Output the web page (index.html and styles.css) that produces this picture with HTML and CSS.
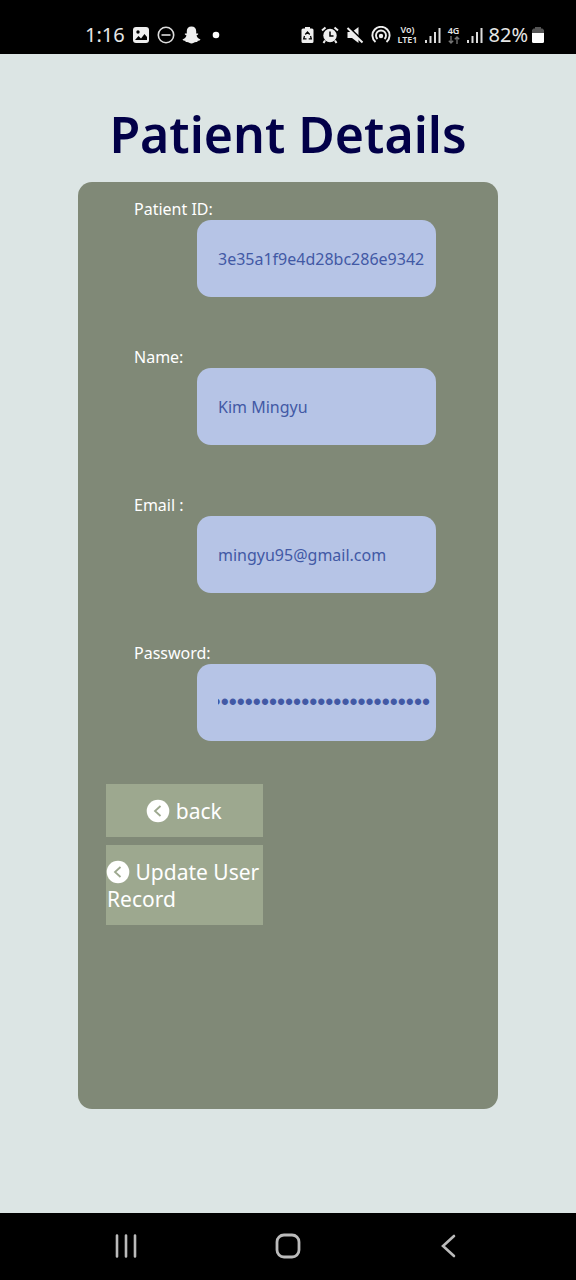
FILE: index.html
```html
<!DOCTYPE html>
<html lang="en">
<head>
<meta charset="utf-8">
<meta name="viewport" content="width=device-width, initial-scale=1">
<title>Patient Details</title>
<link rel="stylesheet" href="styles.css">
</head>
<body>
<header class="status">
  <div class="status-left">
    <span class="time">1:16</span>
    <svg width="18" height="18" viewBox="0 0 18 18"><rect x="1" y="1" width="16" height="16" rx="3" fill="#eee"/><circle cx="6" cy="6" r="1.7"/><path d="M3 14l3.500-4 2.500 2.500 3.500-4.500 2.500 3v3z"/></svg>
    <svg width="18" height="18" viewBox="0 0 18 18" fill="none" stroke="#ddd" stroke-width="1.600"><circle cx="9" cy="9" r="7.700"/><path d="M4.500 9h9"/></svg>
    <svg width="19" height="18" viewBox="0 0 19 18"><path fill="#eee" d="M9.500.5C6.500.5 4.800 2.600 4.800 5v2.500L3 7.500c-.8.700.3 1.500 1.500 2C4 11.500 2.500 12.800.5 13.500c.3 1 1.500 1.200 2.700 1.300l.6 1.200c1.600-.3 2.500 0 3.400.8 1.500 1 3.100 1 4.600 0 .9-.8 1.800-1.100 3.400-.8l.6-1.200c1.200-.1 2.400-.3 2.700-1.300-2-.7-3.500-2-4-4 1.200-.5 2.300-1.300 1.500-2l-1.800 0V5C14.200 2.600 12.500.5 9.500.5z"/></svg>
    <svg class="more" width="8" height="8" viewBox="0 0 8 8"><circle cx="4" cy="4" r="3.300" fill="#fff"/></svg>
  </div>
  <div class="status-right">
    <div class="system">
      <svg width="13" height="18" viewBox="0 0 13 18"><path fill="#eee" d="M4 1h5v1.500h2A1.500 1.500 0 0 1 12.500 4v11.500A1.500 1.500 0 0 1 11 17H2a1.500 1.500 0 0 1-1.500-1.500V4A1.500 1.500 0 0 1 2 2.500h2z"/><path d="M4.300 8.500L6.500 6l2.200 2.500M9.500 10l.8 2.800H7.700M5.500 12.800H2.700l.8-2.800" fill="none" stroke="#000" stroke-width="1.300"/></svg>
      <svg width="18" height="18" viewBox="0 0 18 18"><circle cx="9" cy="9.500" r="6.700" fill="#eee"/><path d="M1 4.500L4.500 1.500M17 4.500l-3.500-3M4 14.500L2.500 17M14 14.500l1.500 2.500" stroke="#eee" stroke-width="2"/><path d="M9 5.500V10h3.500" fill="none" stroke="#000" stroke-width="1.500"/></svg>
      <svg width="18" height="18" viewBox="0 0 18 18"><path d="M1.500 6H6l6.500-5v16L6 12H1.500z" fill="#eee"/><path d="M2.500 1l14 13.500" stroke="#000" stroke-width="2"/><path d="M1.500 2l15 14.500" stroke="#eee" stroke-width="2"/></svg>
      <svg width="20" height="18" viewBox="0 0 20 18" fill="none" stroke="#eee" stroke-width="1.900"><path d="M4.500 16a8.600 8.600 0 1 1 11 0M6.500 13a5 5 0 1 1 7 0"/><circle cx="10" cy="10" r="2.200" fill="#eee" stroke="none"/></svg>
    </div>
    <div class="mobile">
      <span class="volte"><span>Vo)</span><span>LTE1</span></span>
      <svg width="16" height="18" viewBox="0 0 16 18" fill="#ddd"><path d="M0 14h2v3H0zM4.500 10h2v7h-2zM9 6h2v11H9zM13.500 2h2v15h-2z"/></svg>
      <span class="network"><span>4G</span>
        <svg width="12" height="8" viewBox="0 0 12 8" fill="none" stroke="#777" stroke-width="1.300"><path d="M3 0v7M.8 4.800L3 7l2.200-2.200M9 8V1M6.800 3.200L9 1l2.200 2.200"/></svg>
      </span>
      <svg width="16" height="18" viewBox="0 0 16 18" fill="#ddd"><path d="M0 14h2v3H0zM4.500 10h2v7h-2zM9 6h2v11H9zM13.500 2h2v15h-2z"/></svg>
    </div>
    <span class="percent">82%</span>
    <svg class="battery" width="12" height="18" viewBox="0 0 12 18"><path fill="#555" d="M3 1h6v1.500h1.500L12 4v4H0V4l1.500-1.500H3z"/><path fill="#fff" d="M0 7h12v8.500a1.500 1.500 0 0 1-1.500 1.500h-9A1.500 1.500 0 0 1 0 15.500z"/></svg>
  </div>
</header>
<main class="page">
  <h1 class="title">Patient Details</h1>
  <form class="card">
    <div class="field">
      <label for="pid">Patient ID:</label>
      <input id="pid" type="text" value="3e35a1f9e4d28bc286e9342">
    </div>
    <div class="field">
      <label for="name">Name:</label>
      <input id="name" type="text" value="Kim Mingyu">
    </div>
    <div class="field">
      <label for="email">Email :</label>
      <input id="email" type="email" value="mingyu95@gmail.com">
    </div>
    <div class="field">
      <label for="password">Password:</label>
      <input id="password" class="secret" type="password" dir="rtl" value="abcdefghijklmnopqrstuvwxyz0123">
    </div>
    <div class="actions">
      <button class="action center" type="button"><svg class="chevron" width="24" height="24" viewBox="0 0 24 24"><circle cx="12" cy="12" r="11.300" fill="#fff"/><path d="M14.500 7l-5.500 5 5.500 5" fill="none" stroke="#9da88f" stroke-width="1.800"/></svg> back</button>
      <button class="action" type="button"><svg class="chevron" width="24" height="24" viewBox="0 0 24 24"><circle cx="12" cy="12" r="11.300" fill="#fff"/><path d="M14.500 7l-5.500 5 5.500 5" fill="none" stroke="#9da88f" stroke-width="1.800"/></svg> Update User Record</button>
    </div>
  </form>
</main>
<nav class="navbar">
  <button type="button" aria-label="Recent apps"><svg width="26" height="26" viewBox="0 0 26 26" stroke="#bbb" stroke-width="2.600" stroke-linecap="round"><path d="M4 2.500v21M13 2.500v21M22 2.500v21"/></svg></button>
  <button type="button" aria-label="Home"><svg width="26" height="26" viewBox="0 0 26 26" fill="none" stroke="#bbb" stroke-width="2.800"><rect x="2" y="2" width="22" height="22" rx="7"/></svg></button>
  <button type="button" aria-label="Back"><svg width="26" height="26" viewBox="0 0 26 26" fill="none" stroke="#bbb" stroke-width="2.600" stroke-linecap="round"><path d="M17 3L6 13l11 10"/></svg></button>
</nav>
</body>
</html>
```
FILE: styles.css
```css
* { box-sizing: border-box; }
body {
  margin: 0;
  min-height: 100vh;
  display: flex;
  flex-direction: column;
  background: #dce5e4;
  font-family: "Noto Sans", sans-serif;
}
button { border: 0; padding: 0; background: none; font: inherit; color: inherit; }
.status {
  display: flex;
  justify-content: space-between;
  align-items: center;
  height: 54px;
  padding: 16px 32px 0 85px;
  background: #000;
  color: #e6e6e6;
}
.status-left, .status-right, .system, .mobile { display: flex; align-items: center; }
.status-left, .system { gap: 7px; }
.status-right { gap: 6px; }
.mobile { gap: 7px; }
.time, .percent { font-size: 20px; line-height: 24px; }
.more { margin-left: 4px; }
.battery { margin-left: -2px; }
.volte, .network {
  display: flex;
  flex-direction: column;
  align-items: center;
  font-size: 9px;
  line-height: 10px;
  font-weight: 600;
}
.page { flex: 1; padding: 40px 78px 104px; display: flex; flex-direction: column; }
.title {
  margin: 0;
  height: 88px;
  font-size: 50px;
  line-height: 80px;
  font-weight: 600;
  text-align: center;
  white-space: nowrap;
  color: #020048;
}
.card {
  flex: 1;
  padding: 16px 28px 40px;
  border-radius: 14px;
  background: #808977;
  color: #fff;
}
.field {
  display: flex;
  flex-direction: column;
  padding: 0 34px 0 28px;
  margin-bottom: 49px;
  font-size: 16px;
}
.field label { line-height: 22px; }
.field input {
  height: 77px;
  margin-left: 63px;
  padding: 0 6px 0 21px;
  min-width: 0;
  border: 0;
  border-radius: 14px;
  background: #b6c4e6;
  color: #4259a5;
  font: inherit;
}
.field .secret { font-family: "Liberation Sans", sans-serif; font-size: 23px; }
.actions { display: flex; flex-direction: column; gap: 8px; width: 157px; margin-top: -6px; }
.action {
  padding: 14px 1px 12px;
  background: #9da88f;
  font-size: 21px;
  line-height: 27px;
  text-align: left;
}
.center { text-align: center; }
.chevron { vertical-align: -4px; margin-left: -1px; }
.navbar {
  display: flex;
  justify-content: space-between;
  align-items: center;
  height: 67px;
  padding: 0 113px 2px;
  background: #000;
}
.navbar svg { display: block; }
```
